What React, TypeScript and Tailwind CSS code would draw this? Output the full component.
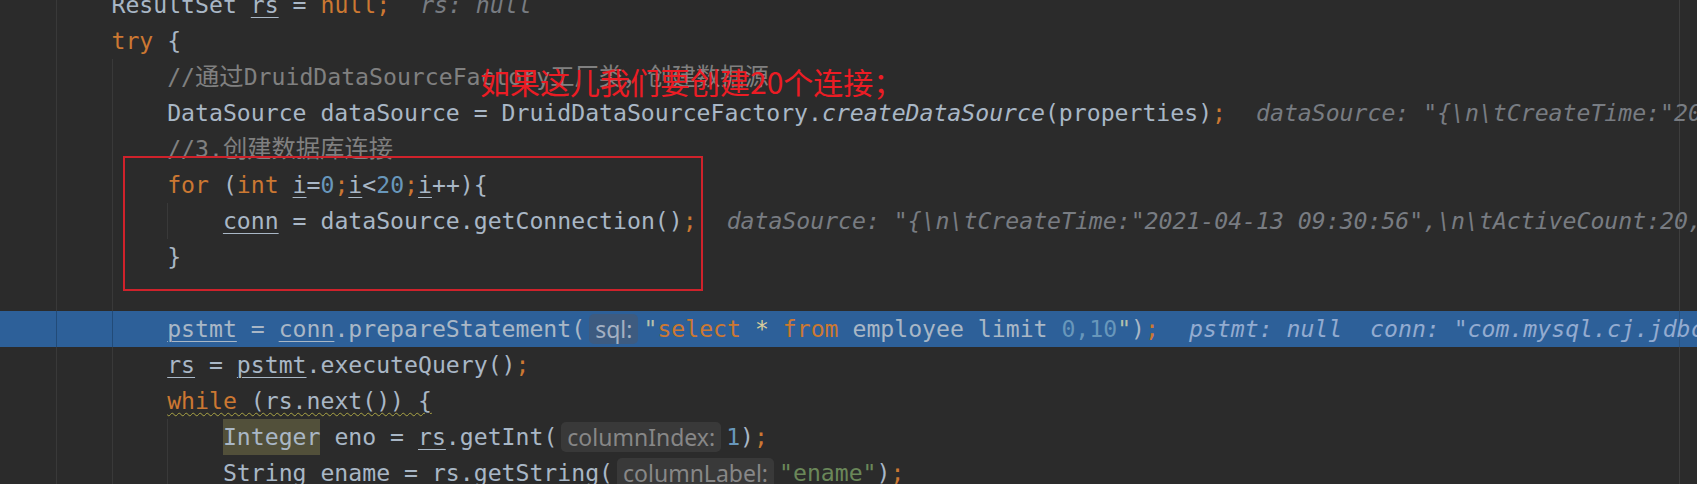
import type { ReactNode } from 'react';

// Darcula-style editor snapshot with a paused debugger line and a red note on top

const GUIDE_POS: Record<number, string> = {
  4: 'left-[56px]',
  8: 'left-[112px]',
  12: 'left-[167px]',
};

const K = ({ children }: { children: ReactNode }) => <span className="text-[#cc7832]">{children}</span>;
const U = ({ children }: { children: ReactNode }) => (
  <span className="underline decoration-1 underline-offset-[4px]">{children}</span>
);
const Num = ({ children }: { children: ReactNode }) => <span className="text-[#6897bb]">{children}</span>;
const Str = ({ children }: { children: ReactNode }) => <span className="text-[#6a8759]">{children}</span>;
const Cm = ({ children }: { children: ReactNode }) => <span className="text-[#808080]">{children}</span>;
const Cjk = ({ children }: { children: ReactNode }) => <span className="text-[24.3px]">{children}</span>;

function Hint({ children, hl = false }: { children: ReactNode; hl?: boolean }) {
  return (
    <span className={hl ? 'ml-[30px] italic text-[#93abd0]' : 'ml-[30px] italic text-[#787c82]'}>
      {children}
    </span>
  );
}

function Chip({ children, hl = false }: { children: ReactNode; hl?: boolean }) {
  return (
    <span
      className={`ml-[4px] mr-[5px] inline-block align-top mt-[3px] h-[30px] leading-[30px] rounded-[5px] px-[6px] text-[23px] [font-family:'Noto_Sans',sans-serif] ${
        hl ? 'bg-[#3d5b80] text-[#a3b0c2]' : 'bg-[#393939] text-[#878787]'
      }`}
    >
      {children}
    </span>
  );
}

function Row({ guides = [], hl = false, children }: { guides?: number[]; hl?: boolean; children?: ReactNode }) {
  return (
    <div className={`relative h-[36px] leading-[36px] whitespace-pre ${hl ? 'bg-[#2d6099]' : ''}`}>
      {guides.map((g) => (
        <span
          key={g}
          className={`absolute top-0 h-full w-px ${GUIDE_POS[g]} ${hl ? 'bg-[#224b78]' : 'bg-[#393939]'}`}
        />
      ))}
      <span className={`absolute top-0 h-full w-px left-[1679px] ${hl ? 'bg-[#2a5382]' : 'bg-[#3e3e3e]'}`} />
      <span className="relative">{children}</span>
    </div>
  );
}

export default function App() {
  return (
    <div className="relative w-[1697px] h-[484px] overflow-hidden bg-[#2b2b2b] text-[#a9b7c6] text-[23.15px] [font-family:'DejaVu_Sans_Mono','Noto_Sans_CJK_SC',monospace]">
      <div className="-mt-[13px]">
        <Row guides={[4]}>
          {'        ResultSet '}
          <U>rs</U>
          {' = '}
          <K>null;</K>
          <Hint>rs: null</Hint>
        </Row>
        <Row guides={[4]}>
          {'        '}
          <K>try</K>
          {' {'}
        </Row>
        <Row guides={[4, 8]}>
          {'            '}
          <Cm>
            //<Cjk>通过</Cjk>DruidDataSourceFactory<Cjk>工厂类，创建数据源</Cjk>
          </Cm>
        </Row>
        <Row guides={[4, 8]}>
          {'            DataSource dataSource = DruidDataSourceFactory.'}
          <span className="italic">createDataSource</span>
          {'(properties)'}
          <K>;</K>
          <Hint>{'dataSource: "{\\n\\tCreateTime:"2021-04-13 09:30:56",\\n\\tActiveCount:20,\\n\\tPoolingCount:0,'}</Hint>
        </Row>
        <Row guides={[4, 8]}>
          {'            '}
          <Cm>
            //3.<Cjk>创建数据库连接</Cjk>
          </Cm>
        </Row>
        <Row guides={[4, 8]}>
          {'            '}
          <K>for</K>
          {' ('}
          <K>int</K> <U>i</U>=<Num>0</Num>
          <K>;</K>
          <U>i</U>
          {'<'}
          <Num>20</Num>
          <K>;</K>
          <U>i</U>
          {'++){'}
        </Row>
        <Row guides={[4, 8, 12]}>
          {'                '}
          <U>conn</U>
          {' = dataSource.getConnection()'}
          <K>;</K>
          <Hint>{'dataSource: "{\\n\\tCreateTime:"2021-04-13 09:30:56",\\n\\tActiveCount:20,\\n\\tPoolingCount:0,'}</Hint>
        </Row>
        <Row guides={[4, 8]}>{'            }'}</Row>
        <Row guides={[4, 8]} />
        <Row guides={[4, 8]} hl>
          {'            '}
          <U>pstmt</U>
          {' = '}
          <U>conn</U>
          {'.prepareStatement('}
          <Chip hl>sql:</Chip>
          <span className="text-[#b4c0ac]">"</span>
          <K>select</K> <span className="text-[#d8cc9c]">*</span> <K>from</K>
          {' employee limit '}
          <Num>0,10</Num>
          <span className="text-[#b4c0ac]">"</span>
          {')'}
          <K>;</K>
          <Hint hl>{'pstmt: null  conn: "com.mysql.cj.jdbc.ConnectionImpl@5d0a1059"'}</Hint>
        </Row>
        <Row guides={[4, 8]}>
          {'            '}
          <U>rs</U>
          {' = '}
          <U>pstmt</U>
          {'.executeQuery()'}
          <K>;</K>
        </Row>
        <Row guides={[4, 8]}>
          {'            '}
          <span className="underline decoration-wavy decoration-1 decoration-[#aaa445] underline-offset-[3px]">
            <K>while</K>
            {' (rs.next()) {'}
          </span>
        </Row>
        <Row guides={[4, 8, 12]}>
          {'                '}
          <span className="inline-block h-[36px] bg-[#52503a]">Integer</span>
          {' eno = '}
          <U>rs</U>
          {'.getInt('}
          <Chip>columnIndex:</Chip>
          <Num>1</Num>
          {')'}
          <K>;</K>
        </Row>
        <Row guides={[4, 8, 12]}>
          {'                String ename = '}
          <U>rs</U>
          {'.getString('}
          <Chip>columnLabel:</Chip>
          <Str>"ename"</Str>
          {')'}
          <K>;</K>
        </Row>
      </div>

      {/* annotation overlay */}
      <div className="absolute left-[123px] top-[156px] w-[580px] h-[135px] border-2 border-[#cf222b]" />
      <div className="absolute left-[480px] top-[66px] leading-none text-[30px] text-[#ec1c24] whitespace-nowrap [font-family:'Noto_Sans_CJK_SC',sans-serif]">
        如果这儿我们要创建20个连接；
      </div>
    </div>
  );
}
